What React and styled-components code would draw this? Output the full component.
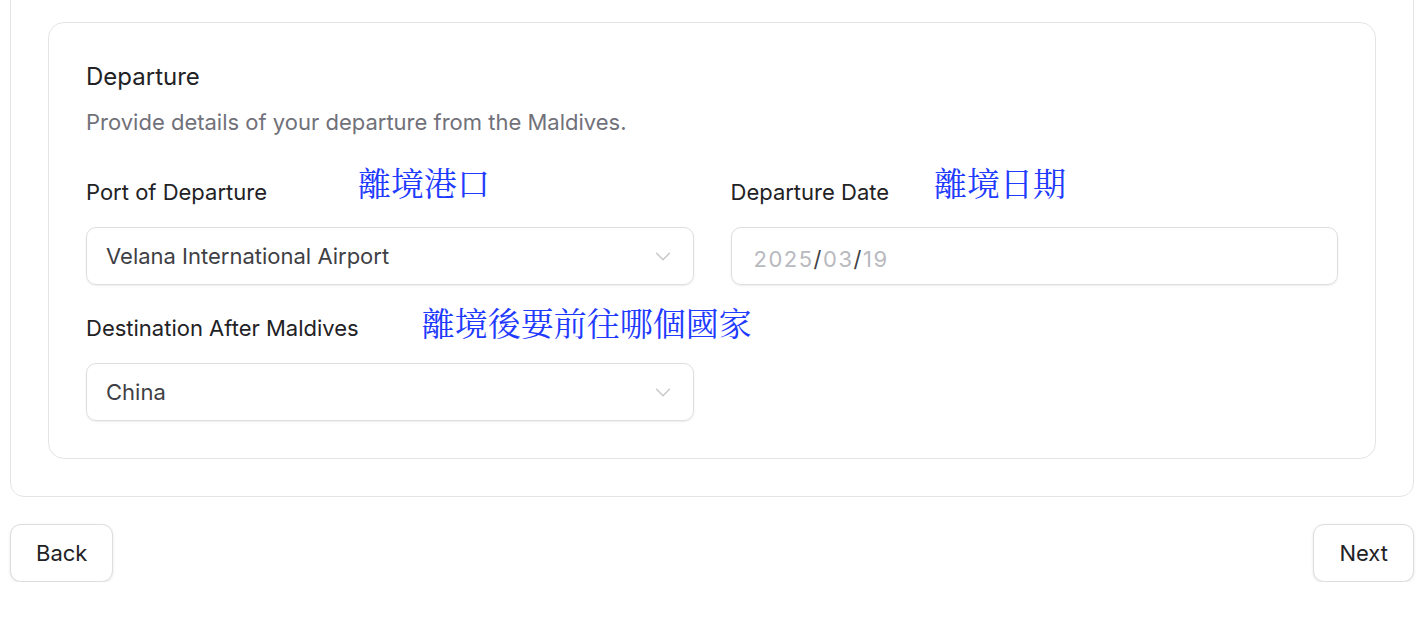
import React from "react";
import styled, { createGlobalStyle } from "styled-components";

const Global = createGlobalStyle`
  html, body { margin: 0; padding: 0; background: #ffffff; }
  body { font-family: Inter, "Noto Sans", sans-serif; color: #27272a; overflow: hidden; }
  * { box-sizing: border-box; }
`;

const Page = styled.div`
  padding: 0 14px 0 10px;
`;

const OuterCard = styled.section`
  margin-top: -16px;
  border: 1px solid #e4e4e7;
  border-radius: 14px;
  padding: 37px;
  background: #fff;
`;

const InnerCard = styled.div`
  border: 1px solid #e4e4e7;
  border-radius: 16px;
  padding: 39px 37px 37px 37px;
`;

const Heading = styled.h3`
  margin: 0;
  font-size: 24px;
  line-height: 30px;
  font-weight: 400;
  color: #222225;
`;

const Description = styled.p`
  margin: 15px 0 0 0;
  font-size: 22px;
  line-height: 30px;
  color: #71717a;
`;

const FieldGrid = styled.div`
  margin-top: 41px;
  display: grid;
  grid-template-columns: 1fr 1fr;
  column-gap: 37px;
  row-gap: 29px;
`;

const Field = styled.div`
  display: flex;
  flex-direction: column;
  gap: 21px;
`;

const Label = styled.label`
  position: relative;
  align-self: flex-start;
  font-size: 22px;
  line-height: 28px;
  font-weight: 400;
  color: #222225;
`;

const Note = styled.span`
  position: absolute;
  left: calc(100% + ${(p) => p.$gap}px);
  top: ${(p) => p.$top}px;
  white-space: nowrap;
  font-family: "Noto Serif CJK TC", "Noto Sans CJK TC", serif;
  font-size: 33px;
  line-height: 36px;
  font-weight: 400;
  color: #1f3bff;
`;

const SelectBox = styled.div`
  height: 58px;
  border: 1px solid #dedee2;
  border-radius: 10px;
  box-shadow: 0 1px 2px rgba(0, 0, 0, 0.08);
  padding: 0 19px 0 19px;
  display: flex;
  align-items: center;
  justify-content: space-between;
  font-size: 22px;
  color: #3f3f46;
`;

const DateBox = styled(SelectBox)`
  padding: 5px 0 0 22px;
  justify-content: flex-start;
  letter-spacing: 1.5px;
`;

const Part = styled.span`
  color: ${(p) => (p.$dim ? "#b9b9c0" : "#3f3f46")};
`;

const Chevron = () => (
  <svg width="22" height="22" viewBox="0 0 24 24" fill="none" stroke="#c8c8ce" strokeWidth="1.6" strokeLinecap="round" strokeLinejoin="round">
    <path d="m5 9 7 7 7-7" />
  </svg>
);

const Footer = styled.div`
  margin-top: 27px;
  display: flex;
  justify-content: space-between;
`;

const Button = styled.button`
  height: 58px;
  padding: 0 25px;
  border: 1px solid #dedee2;
  border-radius: 11px;
  background: #fff;
  box-shadow: 0 1px 3px rgba(0, 0, 0, 0.1);
  font-family: Inter, sans-serif;
  font-size: 22px;
  font-weight: 400;
  color: #222225;
`;

export default function App() {
  return (
    <Page>
      <Global />
      <OuterCard>
        <InnerCard>
          <Heading>Departure</Heading>
          <Description>Provide details of your departure from the Maldives.</Description>
          <FieldGrid>
            <Field>
              <Label>
                Port of Departure
                <Note $gap={91} $top={-14}>離境港口</Note>
              </Label>
              <SelectBox>
                <span>Velana International Airport</span>
                <Chevron />
              </SelectBox>
            </Field>
            <Field>
              <Label>
                Departure Date
                <Note $gap={45} $top={-14}>離境日期</Note>
              </Label>
              <DateBox>
                <Part $dim>2025</Part>
                <Part>/</Part>
                <Part $dim>03</Part>
                <Part>/</Part>
                <Part $dim>19</Part>
              </DateBox>
            </Field>
            <Field>
              <Label>
                Destination After Maldives
                <Note $gap={63} $top={-10}>離境後要前往哪個國家</Note>
              </Label>
              <SelectBox>
                <span>China</span>
                <Chevron />
              </SelectBox>
            </Field>
          </FieldGrid>
        </InnerCard>
      </OuterCard>
      <Footer>
        <Button>Back</Button>
        <Button>Next</Button>
      </Footer>
    </Page>
  );
}
